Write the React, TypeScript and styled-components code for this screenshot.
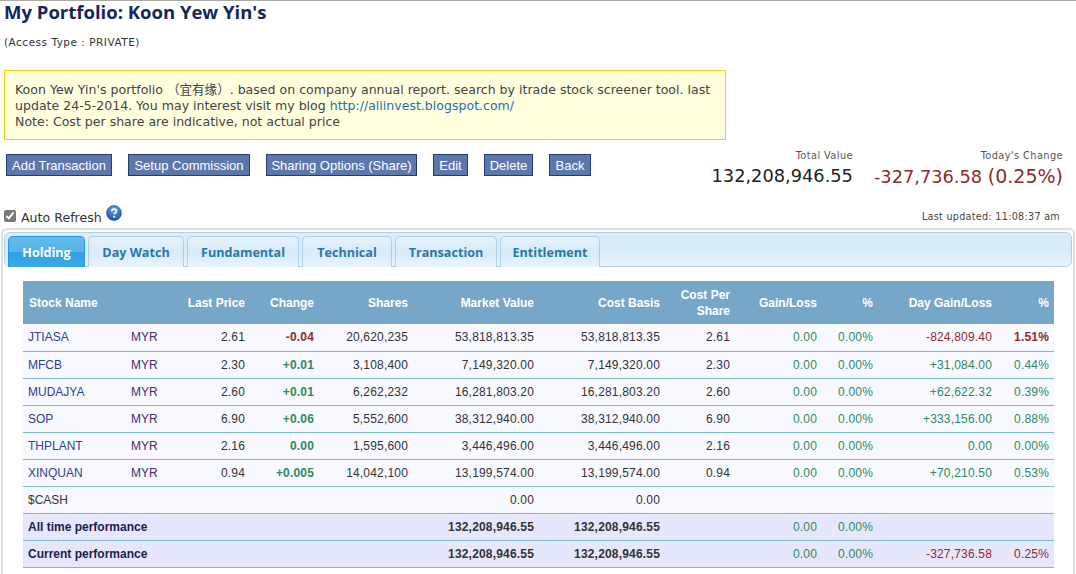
import React from "react";
import styled, { createGlobalStyle } from "styled-components";

const Global = createGlobalStyle`
  html, body { margin: 0; padding: 0; background: #fff; }
  body { font-family: "DejaVu Sans", Verdana, sans-serif; color: #333; overflow: hidden; }
`;

const Page = styled.div`
  width: 1076px;
  height: 574px;
  box-sizing: border-box;
  border-top: 1px solid #aaa;
  overflow: hidden;
`;
const Title = styled.h1`
  margin: 0 0 0 4px;
  height: 23px;
  font: bold 18.5px/21px "Open Sans", "Liberation Sans", sans-serif;
  color: #14275c;
`;
const Access = styled.div`
  margin: 12px 0 0 4px;
  font: 10.5px/12px "DejaVu Sans", sans-serif;
  letter-spacing: 0.5px;
  color: #333;
`;
const Notice = styled.div`
  margin: 22px 0 0 4px;
  width: 722px;
  height: 70px;
  box-sizing: border-box;
  padding: 11px 10px 0;
  background: #ffffdd;
  border: 1px solid #fc0;
  font: 12.55px/16px "DejaVu Sans", "Noto Sans CJK SC", sans-serif;
  color: #444;
  a { color: #2a6da8; text-decoration: none; }
`;
const Toolbar = styled.div`
  display: flex;
  justify-content: space-between;
  margin-top: 8px;
  padding: 0 13px 0 6px;
  height: 51px;
`;
const Buttons = styled.div`
  display: flex;
  gap: 16px;
  margin-top: 6px;
  align-items: flex-start;
`;
const Btn = styled.button<{ $w: number }>`
  height: 22px;
  padding: 1px 0 0;
  width: ${(p) => p.$w}px;
  background: #5c78ab;
  border: 1px solid #1f3d78;
  color: #fff;
  white-space: nowrap;
  font: 13px/20px "Liberation Sans", Arial, sans-serif;
`;
const Stats = styled.div`
  display: flex;
  gap: 21px;
  margin-top: 2px;
`;
const Stat = styled.div`
  text-align: right;
`;
const StatLabel = styled.div`
  font: 9.8px/12px "DejaVu Sans", sans-serif;
  color: #555;
  letter-spacing: 0.4px;
`;
const StatValue = styled.div<{ $red?: boolean }>`
  margin-top: 3px;
  font: 17.8px/22px "DejaVu Sans", sans-serif;
  color: ${(p) => (p.$red ? "#8f2b2b" : "#222")};
`;
const StatPercent = styled.span`
  font-size: 19px;
`;
const RefreshRow = styled.div`
  display: flex;
  align-items: center;
  height: 29px;
  padding: 5px 16px 0 4px;
  box-sizing: border-box;
`;
const Check = styled.input`
  width: 12px;
  height: 12px;
  margin: -1px 5px 0 0;
  accent-color: #777;
`;
const RefreshLabel = styled.span`
  font: 12.6px/16px "DejaVu Sans", sans-serif;
  color: #333;
  margin-top: 3px;
`;
const Help = styled.span`
  width: 16px;
  height: 16px;
  margin: -7px 0 0 4px;
  display: block;
`;
const Updated = styled.span`
  margin-left: auto;
  font: 9.6px/12px "DejaVu Sans", sans-serif;
  color: #444;
  letter-spacing: 0.3px;
  margin-top: 1px;
`;
const Panel = styled.div`
  margin: 0 1px 0 1px;
  height: 400px;
  box-sizing: border-box;
  border: 2px solid #ddd;
  border-bottom: 0;
  border-radius: 6px 6px 0 0;
  padding: 2px 1px 0 1px;
`;
const TabBar = styled.div`
  display: flex;
  gap: 3px;
  height: 35px;
  box-sizing: border-box;
  border: 1px solid #aed0ea;
  border-radius: 6px;
  background: linear-gradient(#deedf7, #d7ebf9 50%, #e9f3fb);
  padding: 3px 0 0 3px;
`;
const Tab = styled.div<{ $active?: boolean; $w: number }>`
  width: ${(p) => p.$w}px;
  height: 31px;
  box-sizing: border-box;
  border: 1px solid ${(p) => (p.$active ? "#2694e8" : "#aed0ea")};
  border-bottom: 0;
  border-radius: 5px 5px 0 0;
  text-align: center;
  font: bold 12.6px/31px "Open Sans", "Liberation Sans", sans-serif;
  color: ${(p) => (p.$active ? "#fff" : "#2779aa")};
  background: ${(p) =>
    p.$active
      ? "linear-gradient(#62bbea, #58b3e6 48%, #2fa0e2 52%, #3baae3)"
      : "linear-gradient(#e6f2fb, #d7ebf9 50%, #eaf4fc)"};
`;
const Table = styled.table`
  border-collapse: collapse;
  table-layout: fixed;
  width: 1031px;
  margin: 14px 0 0 19px;
  font: 12px/14px "Liberation Sans", Arial, sans-serif;
  color: #333;
`;
const Th = styled.th<{ $left?: boolean }>`
  height: 43px;
  padding: 0 5px 0 ${(p) => (p.$left ? "6px" : "0")};
  background: #77a7c8;
  color: #fff;
  font-weight: bold;
  line-height: 16px;
  text-align: ${(p) => (p.$left ? "left" : "right")};
`;
const Row = styled.tr<{ $summary?: boolean }>`
  height: 27px;
  background: ${(p) => (p.$summary ? "#e6e6fc" : "#f8f8ff")};
  font-weight: ${(p) => (p.$summary ? "bold" : "normal")};
  td { border-bottom: 1px solid #7db5dd; box-sizing: border-box; }
`;
const Td = styled.td<{ $tone?: "up" | "down" | "link" | "cur"; $weight?: string; $left?: boolean; $pad?: number }>`
  padding: 0 5px 0 ${(p) => (p.$left ? `${p.$pad ?? 5}px` : "0")};
  white-space: nowrap;
  overflow: visible;
  letter-spacing: ${(p) => (p.$left ? "0" : "0.18px")};
  text-align: ${(p) => (p.$left ? "left" : "right")};
  font-weight: ${(p) => p.$weight ?? "inherit"};
  color: ${(p) =>
    p.$tone === "up" ? "#2f8a5e" : p.$tone === "down" ? "#8f2b2b" : p.$tone === "link" ? "#2c3f8f" : p.$tone === "cur" ? "#4b2a6a" : "inherit"};
`;
const SummaryLabel = styled.span`
  color: #1c1c50;
`;

const widths = [102, 60, 65, 69, 94, 126, 126, 70, 87, 56, 119, 57];

type R = [string, string, string, string, string, string, string, string, string, string];
const rows: R[] = [
  ["JTIASA", "2.61", "-0.04", "20,620,235", "53,818,813.35", "53,818,813.35", "2.61", "-824,809.40", "1.51%", "down"],
  ["MFCB", "2.30", "+0.01", "3,108,400", "7,149,320.00", "7,149,320.00", "2.30", "+31,084.00", "0.44%", "up"],
  ["MUDAJYA", "2.60", "+0.01", "6,262,232", "16,281,803.20", "16,281,803.20", "2.60", "+62,622.32", "0.39%", "up"],
  ["SOP", "6.90", "+0.06", "5,552,600", "38,312,940.00", "38,312,940.00", "6.90", "+333,156.00", "0.88%", "up"],
  ["THPLANT", "2.16", "0.00", "1,595,600", "3,446,496.00", "3,446,496.00", "2.16", "0.00", "0.00%", "up"],
  ["XINQUAN", "0.94", "+0.005", "14,042,100", "13,199,574.00", "13,199,574.00", "0.94", "+70,210.50", "0.53%", "up"],
];

const buttons: [string, number][] = [
  ["Add Transaction", 106],
  ["Setup Commission", 122],
  ["Sharing Options (Share)", 151],
  ["Edit", 35],
  ["Delete", 49],
  ["Back", 42],
];
const tabs: [string, number][] = [
  ["Holding", 77],
  ["Day Watch", 96],
  ["Fundamental", 112],
  ["Technical", 90],
  ["Transaction", 102],
  ["Entitlement", 100],
];

const HelpIcon = () => (
  <Help>
    <svg width="16" height="16" viewBox="0 0 16 16">
      <defs>
        <radialGradient id="h" cx="50%" cy="30%" r="70%">
          <stop offset="0" stopColor="#6fa5e8" />
          <stop offset="1" stopColor="#1a4fa8" />
        </radialGradient>
      </defs>
      <circle cx="8" cy="8" r="7.5" fill="url(#h)" stroke="#1b4b9a" strokeWidth="0.6" />
      <path d="M5.7 6.2c0-1.4 1-2.2 2.4-2.2s2.3.8 2.3 2c0 1-.6 1.5-1.3 2-.6.4-.8.7-.8 1.3" fill="none" stroke="#fff" strokeWidth="1.6" />
      <circle cx="8.2" cy="11.7" r="1" fill="#fff" />
    </svg>
  </Help>
);

export default function App() {
  return (
    <Page>
      <Global />
      <Title>My Portfolio: Koon Yew Yin's</Title>
      <Access>(Access Type : PRIVATE)</Access>
      <Notice>
        Koon Yew Yin's portfolio （宜有缘）. based on company annual report. search by itrade stock screener tool. last
        update 24-5-2014. You may interest visit my blog <a href="#">http://aliinvest.blogspot.com/</a>
        <br />
        Note: Cost per share are indicative, not actual price
      </Notice>
      <Toolbar>
        <Buttons>
          {buttons.map(([b, w]) => (
            <Btn key={b} $w={w}>{b}</Btn>
          ))}
        </Buttons>
        <Stats>
          <Stat>
            <StatLabel>Total Value</StatLabel>
            <StatValue>132,208,946.55</StatValue>
          </Stat>
          <Stat>
            <StatLabel>Today's Change</StatLabel>
            <StatValue $red>-327,736.58 <StatPercent>(0.25%)</StatPercent></StatValue>
          </Stat>
        </Stats>
      </Toolbar>
      <RefreshRow>
        <Check type="checkbox" defaultChecked />
        <RefreshLabel>Auto Refresh</RefreshLabel>
        <HelpIcon />
        <Updated>Last updated: 11:08:37 am</Updated>
      </RefreshRow>
      <Panel>
        <TabBar>
          {tabs.map(([t, w], i) => (
            <Tab key={t} $w={w} $active={i === 0}>{t}</Tab>
          ))}
        </TabBar>
        <Table>
          <colgroup>
            {widths.map((w, i) => (
              <col key={i} style={{ width: w }} />
            ))}
          </colgroup>
          <thead>
            <tr>
              <Th $left>Stock Name</Th>
              <Th />
              <Th>Last Price</Th>
              <Th>Change</Th>
              <Th>Shares</Th>
              <Th>Market Value</Th>
              <Th>Cost Basis</Th>
              <Th>Cost Per Share</Th>
              <Th>Gain/Loss</Th>
              <Th>%</Th>
              <Th>Day Gain/Loss</Th>
              <Th>%</Th>
            </tr>
          </thead>
          <tbody>
            {rows.map((r) => {
              const chTone = r[2].startsWith("-") ? "down" : "up";
              const tone = r[9] as "up" | "down";
              return (
                <Row key={r[0]}>
                  <Td $left $tone="link">{r[0]}</Td>
                  <Td $left $pad={6} $tone="cur">MYR</Td>
                  <Td>{r[1]}</Td>
                  <Td $tone={chTone} $weight="bold">{r[2]}</Td>
                  <Td>{r[3]}</Td>
                  <Td>{r[4]}</Td>
                  <Td>{r[5]}</Td>
                  <Td>{r[6]}</Td>
                  <Td $tone="up">0.00</Td>
                  <Td $tone="up">0.00%</Td>
                  <Td $tone={tone}>{r[7]}</Td>
                  <Td $tone={tone} $weight={r[0] === "JTIASA" ? "bold" : "normal"}>{r[8]}</Td>
                </Row>
              );
            })}
            <Row>
              <Td $left>$CASH</Td>
              <Td /><Td /><Td /><Td />
              <Td>0.00</Td>
              <Td>0.00</Td>
              <Td /><Td /><Td /><Td /><Td />
            </Row>
            <Row $summary>
              <Td $left colSpan={2}><SummaryLabel>All time performance</SummaryLabel></Td>
              <Td /><Td /><Td />
              <Td>132,208,946.55</Td>
              <Td>132,208,946.55</Td>
              <Td />
              <Td $tone="up" $weight="normal">0.00</Td>
              <Td $tone="up" $weight="normal">0.00%</Td>
              <Td /><Td />
            </Row>
            <Row $summary>
              <Td $left colSpan={2}><SummaryLabel>Current performance</SummaryLabel></Td>
              <Td /><Td /><Td />
              <Td>132,208,946.55</Td>
              <Td>132,208,946.55</Td>
              <Td />
              <Td $tone="up" $weight="normal">0.00</Td>
              <Td $tone="up" $weight="normal">0.00%</Td>
              <Td $tone="down" $weight="normal">-327,736.58</Td>
              <Td $tone="down" $weight="normal">0.25%</Td>
            </Row>
          </tbody>
        </Table>
      </Panel>
    </Page>
  );
}
